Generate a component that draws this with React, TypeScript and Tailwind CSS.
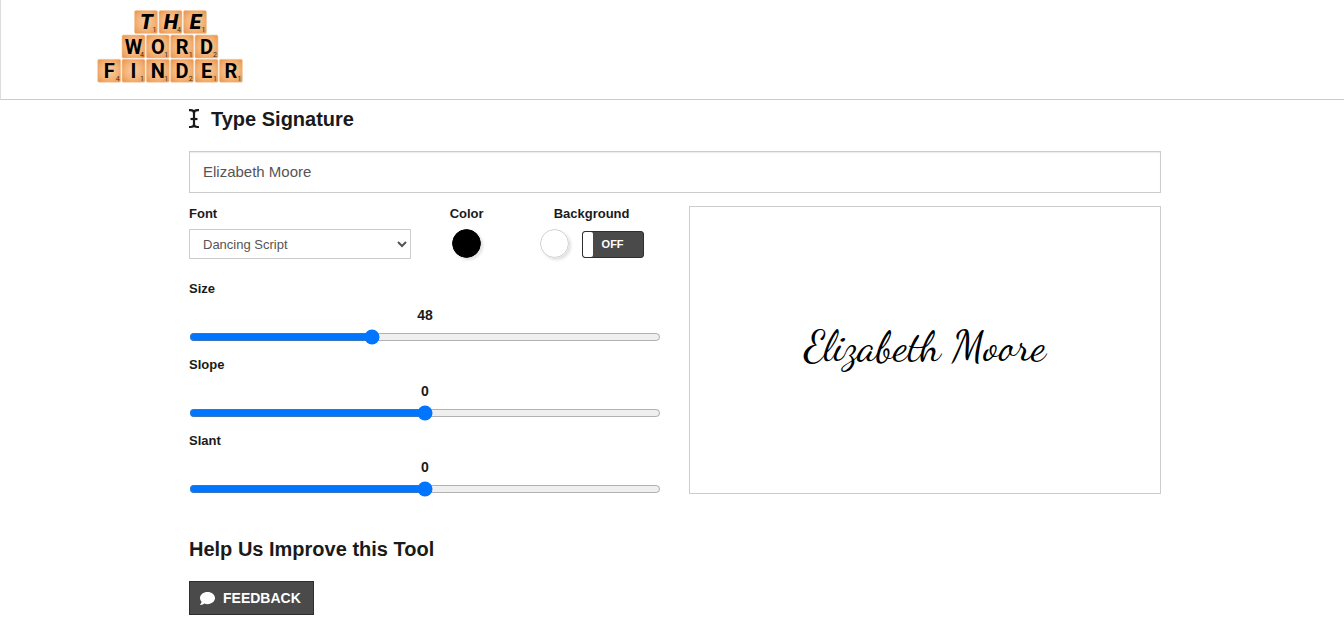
import React, { useState } from "react";
import { FaComment } from "react-icons/fa";

type Tile = { letter: string; points: number; x: number; y: number; brush?: boolean };

const tiles: Tile[] = [
  { letter: "T", points: 1, x: 37.5, y: 0.5, brush: true },
  { letter: "H", points: 4, x: 62, y: 0.5, brush: true },
  { letter: "E", points: 1, x: 86.5, y: 0.5, brush: true },
  { letter: "W", points: 4, x: 25, y: 25 },
  { letter: "O", points: 1, x: 49.3, y: 25 },
  { letter: "R", points: 1, x: 73.6, y: 25 },
  { letter: "D", points: 2, x: 98, y: 25 },
  { letter: "F", points: 4, x: 0.7, y: 49.3 },
  { letter: "I", points: 1, x: 25, y: 49.3 },
  { letter: "N", points: 1, x: 49.3, y: 49.3 },
  { letter: "D", points: 2, x: 73.6, y: 49.3 },
  { letter: "E", points: 1, x: 98, y: 49.3 },
  { letter: "R", points: 1, x: 122.4, y: 49.3 },
];

const Logo = () => (
  <svg width="146" height="74" viewBox="0 0 146 74" role="img" aria-label="The Word Finder">
    <defs>
      <radialGradient id="wood" cx="0.5" cy="0.5" r="0.7">
        <stop offset="0" stopColor="#f8cfa6" />
        <stop offset="0.55" stopColor="#f3b377" />
        <stop offset="1" stopColor="#e8914a" />
      </radialGradient>
    </defs>
    {tiles.map((tile, index) => (
      <g key={index}>
        <rect
          x={tile.x}
          y={tile.y}
          width="23"
          height="23"
          rx="1.5"
          fill="url(#wood)"
          stroke="#f3c9a0"
          strokeWidth="0.6"
        />
        <text
          x={tile.x + (tile.brush ? 12 : 11.5)}
          y={tile.y + 18.7}
          textAnchor="middle"
          className={
            tile.brush
              ? "fill-black font-[Roboto,sans-serif] text-[21px] font-black italic"
              : "fill-black font-[Roboto,sans-serif] text-[20px] font-bold"
          }
        >
          {tile.letter}
        </text>
        <text
          x={tile.x + 20}
          y={tile.y + 21.5}
          textAnchor="middle"
          className="fill-[#4a2c10] font-[Roboto,sans-serif] text-[7px]"
        >
          {tile.points}
        </text>
      </g>
    ))}
  </svg>
);

const CursorIcon = () => (
  <svg
    width="10"
    height="20"
    viewBox="0 0 10 20"
    fill="none"
    stroke="currentColor"
    strokeWidth="2.2"
    aria-hidden="true"
  >
    <path d="M0 1.1h1.5C3.500 1.1 5 2 5 4v11.500C5 17.200 3.500 18 1.500 18H0" />
    <path d="M10 1.1H8.500C6.500 1.100 5 2 5 4M5 15.500C5 17.200 6.500 18 8.500 18H10" />
    <path d="M1.500 10h7" />
  </svg>
);

type SliderProps = {
  id: string;
  label: string;
  min: number;
  max: number;
  value: number;
  onChange: (value: number) => void;
};

const Slider = ({ id, label, min, max, value, onChange }: SliderProps) => (
  <div className="flex flex-col">
    <label htmlFor={id} className="text-[13px] leading-4 font-bold">
      {label}
    </label>
    <output htmlFor={id} className="mt-[10px] text-center text-sm leading-4 font-bold">
      {value}
    </output>
    <input
      id={id}
      type="range"
      min={min}
      max={max}
      value={value}
      onChange={(e) => onChange(Number(e.target.value))}
      className="mt-[6px] h-4 w-full accent-[#0075ff]"
    />
  </div>
);

const swatch =
  "size-[29px] cursor-pointer appearance-none rounded-full shadow-[2px_2px_3px_rgba(0,0,0,0.12)] [&::-webkit-color-swatch-wrapper]:p-0 [&::-webkit-color-swatch]:rounded-full [&::-webkit-color-swatch]:border [&::-webkit-color-swatch]:border-solid";

const App = () => {
  const [name, setName] = useState("Elizabeth Moore");
  const [font, setFont] = useState("Dancing Script");
  const [color, setColor] = useState("#000000");
  const [background, setBackground] = useState("#ffffff");
  const [useBackground, setUseBackground] = useState(false);
  const [size, setSize] = useState(48);
  const [slope, setSlope] = useState(0);
  const [slant, setSlant] = useState(0);

  return (
    <div className="min-h-screen bg-white font-['Liberation_Sans',Arial,sans-serif] text-[#1a1a1a]">
      {/* Header */}
      <header className="border-b border-l border-b-[#ccc] border-l-[#ddd] pt-[10px] pb-[15px] pl-24">
        <a href="#" className="block w-fit">
          <Logo />
        </a>
      </header>

      <main className="pl-[6px]">
        <div className="mx-auto max-w-[972px] pt-[5px]">
          <h1 className="flex items-center gap-3 text-xl leading-7 font-bold">
            <CursorIcon />
            Type Signature
          </h1>

          <input
            type="text"
            aria-label="Signature text"
            value={name}
            onChange={(e) => setName(e.target.value)}
            className="mt-[18px] block h-[42px] w-full border border-[#ccc] px-[13px] pb-[2px] text-[15px] text-[#555] shadow-[inset_0_1px_1px_rgba(0,0,0,0.08)]"
          />

          <div className="mt-[13px] grid grid-cols-2 items-start gap-7">
            {/* Settings */}
            <div>
              <div className="grid grid-cols-[2fr_1fr_1.25fr]">
                <div className="flex flex-col gap-2">
                  <label htmlFor="font" className="text-[13px] leading-[15px] font-bold">
                    Font
                  </label>
                  <select
                    id="font"
                    value={font}
                    onChange={(e) => setFont(e.target.value)}
                    className="h-[30px] w-full border border-[#ccc] bg-white pl-[9px] text-[13px] text-[#555]"
                  >
                    <option>Dancing Script</option>
                    <option>Great Vibes</option>
                    <option>Pacifico</option>
                  </select>
                </div>

                <div className="flex flex-col items-center gap-2">
                  <label htmlFor="color" className="text-[13px] leading-[15px] font-bold">
                    Color
                  </label>
                  <input
                    id="color"
                    type="color"
                    value={color}
                    onChange={(e) => setColor(e.target.value)}
                    className={`${swatch} [&::-webkit-color-swatch]:border-black`}
                  />
                </div>

                <div className="flex flex-col items-center gap-2">
                  <label htmlFor="background" className="text-[13px] leading-[15px] font-bold">
                    Background
                  </label>
                  <div className="flex items-end gap-[13px]">
                    <input
                      id="background"
                      type="color"
                      value={background}
                      onChange={(e) => setBackground(e.target.value)}
                      className={`${swatch} [&::-webkit-color-swatch]:border-[#ccc]`}
                    />
                    <label className="flex h-[27px] w-[62px] cursor-pointer overflow-hidden rounded-[3px] border border-[#2e2e2e] bg-[#4a4a4a] text-[11px] font-bold text-white">
                      <input
                        type="checkbox"
                        checked={useBackground}
                        onChange={(e) => setUseBackground(e.target.checked)}
                        className="peer sr-only"
                      />
                      <span className="w-[10px] rounded-[2px] bg-white peer-checked:order-last" />
                      <span className="flex flex-1 items-center justify-center pr-[10px]">
                        {useBackground ? "ON" : "OFF"}
                      </span>
                    </label>
                  </div>
                </div>
              </div>

              <div className="mt-[22px] flex flex-col gap-3">
                <Slider id="size" label="Size" min={8} max={112} value={size} onChange={setSize} />
                <Slider id="slope" label="Slope" min={-45} max={45} value={slope} onChange={setSlope} />
                <Slider id="slant" label="Slant" min={-45} max={45} value={slant} onChange={setSlant} />
              </div>
            </div>

            {/* Preview */}
            <div
              className="flex min-h-72 items-center justify-center border border-[#ccc] pb-2"
              style={{ backgroundColor: useBackground ? background : undefined }}
            >
              <p
                className="font-['Dancing_Script',cursive] text-[43px] leading-[52px]"
                style={{ color }}
              >
                {name}
              </p>
            </div>
          </div>

          <h2 className="mt-[38px] text-xl leading-7 font-bold">Help Us Improve this Tool</h2>
          <button className="mt-[18px] flex h-[34px] items-center gap-2 border border-[#2e2e2e] bg-[#4a4a4a] pr-3 pl-[10px] text-sm font-bold text-white">
            <FaComment className="size-[15px]" />
            FEEDBACK
          </button>
        </div>
      </main>
    </div>
  );
};

export default App;
